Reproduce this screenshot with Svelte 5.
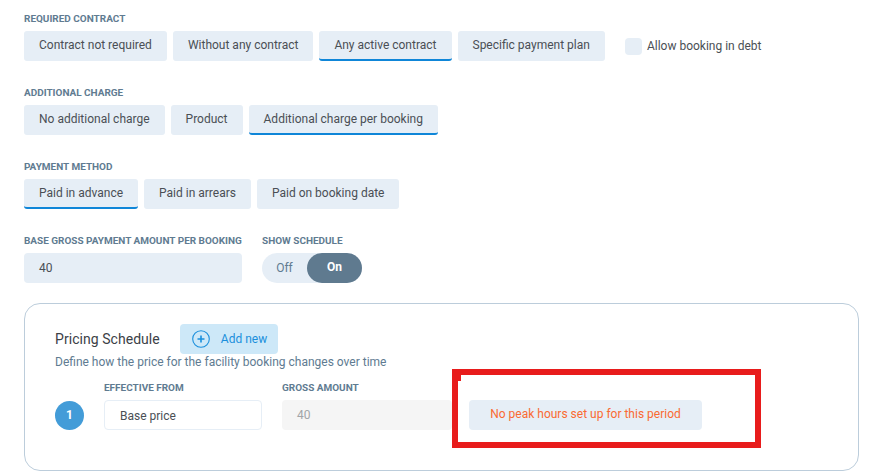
<script>
  const contractOptions = [
    { label: 'Contract not required' },
    { label: 'Without any contract' },
    { label: 'Any active contract', active: true },
    { label: 'Specific payment plan' }
  ];
  const chargeOptions = [
    { label: 'No additional charge' },
    { label: 'Product' },
    { label: 'Additional charge per booking', active: true }
  ];
  const paymentOptions = [
    { label: 'Paid in advance', active: true },
    { label: 'Paid in arrears' },
    { label: 'Paid on booking date' }
  ];
</script>

<div class="page">
  <section class="group">
    <div class="label">Required contract</div>
    <div class="row">
      {#each contractOptions as opt}
        <button class="tab" class:active={opt.active}>{opt.label}</button>
      {/each}
      <div class="check">
        <span class="box"></span>
        <span>Allow booking in debt</span>
      </div>
    </div>
  </section>

  <section class="group">
    <div class="label">Additional charge</div>
    <div class="row">
      {#each chargeOptions as opt}
        <button class="tab" class:active={opt.active}>{opt.label}</button>
      {/each}
    </div>
  </section>

  <section class="group">
    <div class="label">Payment method</div>
    <div class="row">
      {#each paymentOptions as opt}
        <button class="tab" class:active={opt.active}>{opt.label}</button>
      {/each}
    </div>
  </section>

  <section class="amount-row">
    <div class="field base">
      <div class="label">Base gross payment amount per booking</div>
      <div class="input filled">40</div>
    </div>
    <div class="field">
      <div class="label">Show schedule</div>
      <div class="toggle">
        <span class="off">Off</span>
        <span class="on">On</span>
      </div>
    </div>
  </section>

  <div class="card">
    <div class="card-head">
      <h3>Pricing Schedule</h3>
      <button class="add">
        <svg width="18" height="18" viewBox="0 0 18 18" fill="none" stroke="#1a8fdc">
          <circle cx="9" cy="9" r="8.3" stroke-width="1.1" />
          <path d="M9 5.5v7M5.5 9h7" stroke-width="1.6" />
        </svg>
        <span>Add new</span>
      </button>
    </div>
    <p class="desc">Define how the price for the facility booking changes over time</p>
    <div class="period">
      <span class="num">1</span>
      <div class="field from">
        <div class="label">Effective from</div>
        <div class="input outline">Base price</div>
      </div>
      <div class="field gross">
        <div class="label">Gross amount</div>
        <div class="input disabled">40</div>
      </div>
      <div class="peak">No peak hours set up for this period</div>
    </div>
    <div class="annotation"></div>
  </div>
</div>

<style>
  :global(body) {
    background: #fff;
    font-family: Roboto, "Liberation Sans", sans-serif;
  }

  .page {
    width: 877px;
    height: 471px;
    box-sizing: border-box;
    padding: 14px 18px 0 24px;
    overflow: hidden;
    color: #4a4f55;
    font-size: 12px;
  }

  .group {
    height: 74px;
  }

  .label {
    height: 17px;
    font-size: 9.97px;
    line-height: 9px;
    font-weight: 700;
    text-transform: uppercase;
    color: #607b91;
    white-space: nowrap;
  }

  .row {
    display: flex;
    align-items: center;
    gap: 6px;
  }

  .tab {
    height: 30px;
    box-sizing: border-box;
    padding: 0 15px 2px;
    border: 0;
    border-radius: 3px;
    background: #e6eef6;
    color: #4a4f55;
    font: 400 12px Roboto, sans-serif;
    white-space: nowrap;
  }

  .tab.active {
    border-bottom: 2px solid #0f86d8;
    padding-bottom: 0;
  }

  .check {
    display: flex;
    align-items: center;
    gap: 5px;
    margin-left: 14px;
    height: 30px;
  }

  .box {
    width: 17px;
    height: 17px;
    border-radius: 4px;
    background: #e6eef6;
  }

  .amount-row {
    display: flex;
    gap: 20px;
    height: 67px;
  }

  .field.base {
    width: 218px;
  }

  .input {
    height: 30px;
    box-sizing: border-box;
    display: flex;
    align-items: center;
    padding: 0 15px;
    border-radius: 4px;
  }

  .filled {
    background: #e6eef6;
  }

  .toggle {
    display: flex;
    width: 100px;
    height: 30px;
    border-radius: 15px;
    background: #e6eef6;
  }

  .off {
    width: 45px;
    line-height: 30px;
    text-align: center;
    color: #607b91;
  }

  .on {
    flex: 1;
    line-height: 28px;
    text-align: center;
    font-weight: 700;
    color: #fff;
    background: #5f7a8f;
    border-radius: 15px;
  }

  .card {
    position: relative;
    width: 835px;
    height: 168px;
    box-sizing: border-box;
    padding: 20px 30px 0;
    border: 1px solid #bccddb;
    border-radius: 16px;
  }

  .card-head {
    display: flex;
    align-items: center;
    gap: 20px;
  }

  h3 {
    margin: 0;
    font-size: 14px;
    font-weight: 400;
    color: #3c4146;
    letter-spacing: 0.05px;
  }

  .add {
    display: flex;
    align-items: center;
    gap: 11px;
    height: 30px;
    padding: 0 11px 0 12px;
    border: 0;
    border-radius: 4px;
    background: #cde8f8;
    color: #1a8fdc;
    font: 400 12px Roboto, sans-serif;
  }

  .desc {
    margin: 1px 0 0;
    line-height: 14px;
    color: #607b91;
  }

  .period {
    display: flex;
    align-items: flex-end;
    margin-top: 14px;
  }

  .num {
    width: 29px;
    height: 29px;
    margin-right: 20px;
    border-radius: 50%;
    background: #439cd8;
    color: #fff;
    font-weight: 700;
    font-size: 12px;
    line-height: 28px;
    text-align: center;
  }

  .from {
    width: 158px;
    margin-right: 20px;
  }

  .gross {
    width: 170px;
    margin-right: 17px;
  }

  .outline {
    padding-top: 1px;
    border: 1px solid #e6eef6;
    color: #4a4f55;
  }

  .disabled {
    background: #f5f5f5;
    color: #a2a5a8;
  }

  .peak {
    width: 233px;
    height: 30px;
    line-height: 29px;
    text-align: center;
    border-radius: 4px;
    background: #e6eef6;
    color: #fa6a32;
  }

  /* red highlight drawn over the screenshot */
  .annotation {
    position: absolute;
    left: 427px;
    top: 65px;
    width: 297px;
    height: 67px;
    border: 6px solid #e81c1c;
  }

  .annotation::after {
    content: '';
    position: absolute;
    left: 0;
    top: 0;
    width: 3px;
    height: 6px;
    background: #e81c1c;
  }
</style>
